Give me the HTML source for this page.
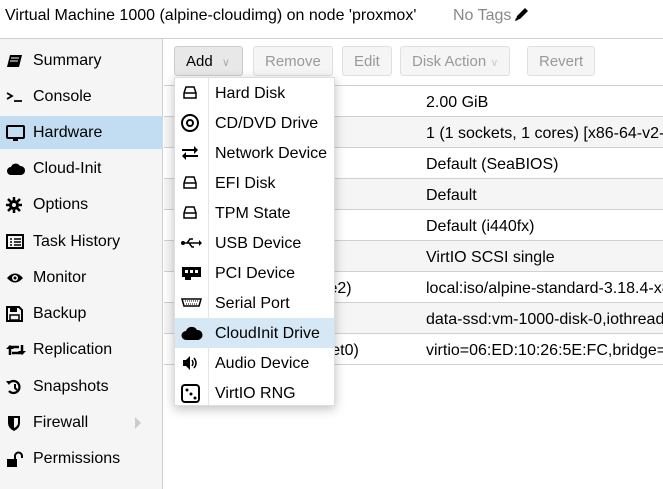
<!DOCTYPE html>
<html><head><style>
*{margin:0;padding:0;box-sizing:border-box}
body{width:663px;height:489px;overflow:hidden;background:#fff;font-family:"Liberation Sans",sans-serif;font-size:16px;color:#000;position:relative}
.a{position:absolute;white-space:nowrap}
#side{position:absolute;left:0;top:39px;width:163px;height:450px;background:#f5f5f5;border-right:1px solid #cfcfcf}
.si{position:absolute;left:0;width:163px;height:33px;line-height:34px;padding-left:33px}
.si svg{position:absolute;left:6px;top:9px}
.sel{background:#c2ddf2}
.btn{position:absolute;top:46px;height:30px;line-height:30px;border:1px solid #e0e0e0;border-radius:3px;background:#f5f5f5;color:#999;font-size:15px;padding:0 11px;white-space:nowrap}
.row{position:absolute;left:164px;width:499px;height:31px;border-bottom:1px solid #d0d0d0;line-height:33px;overflow:hidden;white-space:nowrap}
.row span{position:absolute;left:262px;white-space:nowrap}
.g{background:#f5f5f5}
#menu{position:absolute;left:174px;top:77px;width:161px;height:329px;background:#fff;border:1px solid #ddd;box-shadow:0 3px 10px rgba(0,0,0,.25)}
#menu .sep{position:absolute;left:33px;top:0;width:1px;height:327px;background:#e5e5e5}
.mi{position:absolute;left:0;width:159px;height:30px;line-height:32px;padding-left:40px}
.mi svg{position:absolute;left:6px;top:6px}
.hl{background:#d6e8f6}
</style></head><body>
<div class="a" style="left:5px;top:7px;">Virtual Machine 1000 (alpine-cloudimg) on node 'proxmox'</div>
<div class="a" style="left:453px;top:7px;color:#888">No Tags</div>
<svg class="a" style="left:513px;top:7px" width="16" height="16" viewBox="0 0 16 16"><path d="M3 13l1-4 8-8 3 3-8 8z M2 14l1-3 2 2z" fill="#000"/></svg>
<div class="a" style="left:0;top:38px;width:663px;height:1px;background:#cfcfcf"></div>

<div id="side">
<div class="si" style="top:5px"><svg width="18" height="16"><path d="M4 2h12l-3 12H1z" fill="#000"/><path d="M5 5h8M4 8h8" stroke="#fff"/></svg>Summary</div>
<div class="si" style="top:41px"><svg width="20" height="16"><path d="M1 4l5 3-5 3M8 12h8" stroke="#000" stroke-width="1.8" fill="none"/></svg>Console</div>
<div class="si sel" style="top:77px"><svg width="20" height="18"><rect x="1" y="1" width="17" height="12" rx="1" stroke="#000" stroke-width="2" fill="none"/><path d="M7 13h5v3H7z" fill="#000"/></svg>Hardware</div>
<div class="si" style="top:113px"><svg width="20" height="16"><path d="M5 14a4 4 0 0 1 0-8a5 5 0 0 1 9-1a4 4 0 0 1 1 9z" fill="#000"/></svg>Cloud-Init</div>
<div class="si" style="top:149px"><svg width="18" height="16"><circle cx="8" cy="8" r="5" fill="#000"/><path d="M8 0v16M0 8h16M2 2l12 12M14 2L2 14" stroke="#000" stroke-width="2.5"/><circle cx="8" cy="8" r="2" fill="#f5f5f5"/></svg>Options</div>
<div class="si" style="top:186px"><svg width="20" height="16"><rect x="1" y="1" width="16" height="13" fill="none" stroke="#000" stroke-width="2"/><path d="M4 5h2M4 8h2M4 11h2M8 5h7M8 8h7M8 11h7" stroke="#000" stroke-width="1.5"/></svg>Task History</div>
<div class="si" style="top:222px"><svg width="20" height="16"><path d="M1 8q8-9 16 0q-8 9-16 0z" fill="#000"/><circle cx="9" cy="8" r="3" fill="#f5f5f5"/><circle cx="9" cy="8" r="1.5" fill="#000"/></svg>Monitor</div>
<div class="si" style="top:258px"><svg width="18" height="16"><path d="M1 1h12l3 3v11H1z" fill="none" stroke="#000" stroke-width="2"/><rect x="4" y="2" width="7" height="4" fill="#000"/><rect x="4" y="9" width="9" height="5" fill="none" stroke="#000" stroke-width="1.5"/></svg>Backup</div>
<div class="si" style="top:294px"><svg width="20" height="16"><path d="M4 13V5h9M16 3v8H6" stroke="#000" stroke-width="2.5" fill="none"/><path d="M0 7l4-4 4 4zM12 9l4 4 4-4z" fill="#000"/></svg>Replication</div>
<div class="si" style="top:331px"><svg width="18" height="16"><path d="M3 4a6 6 0 1 1 0 8" stroke="#000" stroke-width="2.2" fill="none"/><path d="M0 2l5 0-2 4z" fill="#000"/><path d="M9 5v4l2 2" stroke="#000" stroke-width="2" fill="none"/></svg>Snapshots</div>
<div class="si" style="top:367px"><svg width="18" height="16"><path d="M2 1h12v7q0 5-6 8q-6-3-6-8z" fill="#000"/><path d="M8 3h4v5q0 3-4 5z" fill="#f5f5f5"/></svg>Firewall<svg style="left:134px;top:11px" width="8" height="12"><path d="M1 0l6 6-6 6z" fill="#ccc"/></svg></div>
<div class="si" style="top:403px"><svg width="20" height="16"><rect x="1" y="8" width="10" height="8" fill="#000"/><path d="M9 8V5a3.5 3.5 0 0 1 7 0v2" stroke="#000" stroke-width="2" fill="none"/></svg>Permissions</div>
</div>

<div class="btn" style="left:174px;width:69px;color:#000;background:#e8e8e8;border-color:#ccc">Add <span style="color:#aaa;font-size:11px;margin-left:5px">&#8744;</span></div>
<div class="btn" style="left:253px">Remove</div>
<div class="btn" style="left:342px">Edit</div>
<div class="btn" style="left:400px">Disk Action <span style="color:#ccc;font-size:11px">&#8744;</span></div>
<div class="btn" style="left:527px">Revert</div>

<div class="a" style="left:164px;top:85px;width:499px;height:1px;background:#d0d0d0"></div>
<div class="row" style="top:86px"><span>2.00 GiB</span></div>
<div class="row g" style="top:117px"><span>1 (1 sockets, 1 cores) [x86-64-v2-AES]</span></div>
<div class="row" style="top:148px"><span>Default (SeaBIOS)</span></div>
<div class="row g" style="top:179px"><span>Default</span></div>
<div class="row" style="top:210px"><span>Default (i440fx)</span></div>
<div class="row g" style="top:241px"><span>VirtIO SCSI single</span></div>
<div class="row" style="top:272px"><i style="position:absolute;left:152px;font-style:normal">ide2)</i><span>local:iso/alpine-standard-3.18.4-x86_64.iso</span></div>
<div class="row g" style="top:303px"><span>data-ssd:vm-1000-disk-0,iothread=1</span></div>
<div class="row" style="top:334px"><i style="position:absolute;left:153px;font-style:normal">(net0)</i><span>virtio=06:ED:10:26:5E:FC,bridge=vmbr0</span></div>

<div id="menu"><div class="sep"></div>
<div class="mi" style="top:0"><svg width="20" height="18"><path d="M3 9l2-6h8l2 6v5H3z" fill="none" stroke="#000" stroke-width="1.5"/><path d="M3 9h12" stroke="#000" stroke-width="1.5"/></svg>Hard Disk</div>
<div class="mi" style="top:30px"><svg width="20" height="20"><circle cx="9" cy="9" r="8" fill="none" stroke="#000" stroke-width="2"/><circle cx="9" cy="9" r="3" fill="none" stroke="#000" stroke-width="2"/></svg>CD/DVD Drive</div>
<div class="mi" style="top:60px"><svg width="20" height="18"><path d="M1 6h14M3 12h14" stroke="#000" stroke-width="2"/><path d="M13 2l4 4-4 4zM5 8l-4 4 4 4z" fill="#000"/></svg>Network Device</div>
<div class="mi" style="top:90px"><svg width="20" height="18"><path d="M3 9l2-6h8l2 6v5H3z" fill="none" stroke="#000" stroke-width="1.5"/><path d="M3 9h12" stroke="#000" stroke-width="1.5"/></svg>EFI Disk</div>
<div class="mi" style="top:120px"><svg width="20" height="18"><path d="M3 9l2-6h8l2 6v5H3z" fill="none" stroke="#000" stroke-width="1.5"/><path d="M3 9h12" stroke="#000" stroke-width="1.5"/></svg>TPM State</div>
<div class="mi" style="top:150px"><svg width="22" height="18"><path d="M2 9h18M6 9l3-4h3M8 9l3 4h2" stroke="#000" stroke-width="1.5" fill="none"/><circle cx="2" cy="9" r="2" fill="#000"/><path d="M18 6l3 3-3 3z" fill="#000"/></svg>USB Device</div>
<div class="mi" style="top:180px"><svg width="22" height="18"><rect x="1" y="3" width="19" height="10" fill="#000"/><path d="M4 6h3v3H4zM9 6h3v3H9zM14 6h3v3h-3z" fill="#fff"/><path d="M4 13v3h6v-3" fill="#000"/></svg>PCI Device</div>
<div class="mi" style="top:210px"><svg width="22" height="18"><path d="M1 5h19l-2 7H3z" fill="none" stroke="#000" stroke-width="1.5"/><path d="M4 7h13M5 10h11" stroke="#000" stroke-dasharray="1 1"/></svg>Serial Port</div>
<div class="mi hl" style="top:240px"><svg width="22" height="18"><path d="M5 16a4.5 4.5 0 0 1 0-9a6 6 0 0 1 11-1a5 5 0 0 1 1 10z" fill="#000"/></svg>CloudInit Drive</div>
<div class="mi" style="top:270px"><svg width="20" height="18"><path d="M2 6h3l4-4v14l-4-4H2z" fill="#000"/><path d="M11 6q2 3 0 6M13 4q4 5 0 10" stroke="#000" stroke-width="1.5" fill="none"/></svg>Audio Device</div>
<div class="mi" style="top:300px"><svg width="20" height="20"><rect x="1" y="1" width="17" height="17" rx="3" fill="none" stroke="#000" stroke-width="2"/><circle cx="6" cy="6" r="1.5"/><circle cx="10" cy="10" r="1.5"/><circle cx="14" cy="14" r="1.5"/></svg>VirtIO RNG</div>
</div>
</body></html>
